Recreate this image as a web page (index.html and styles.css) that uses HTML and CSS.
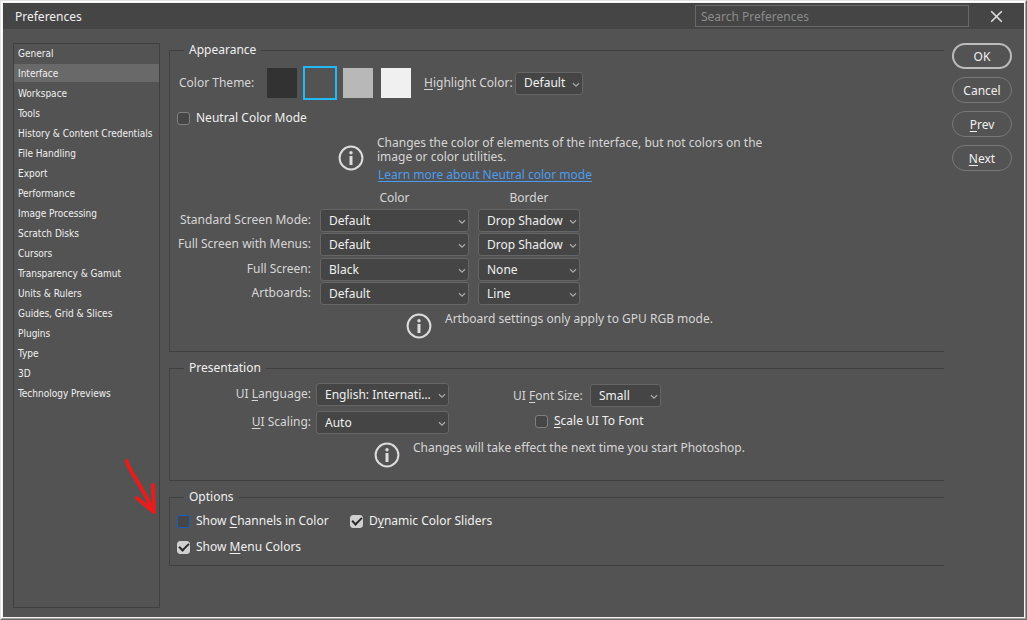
FILE: index.html
```html
<!DOCTYPE html>
<html lang="en">
<head>
<meta charset="utf-8">
<title>Preferences</title>
<link rel="stylesheet" href="styles.css">
</head>
<body>
<svg class="defs" aria-hidden="true">
  <symbol id="chevron" viewBox="0 0 8 6"><path d="M1 1.2 4 4.2 7 1.2" fill="none" stroke="#a8a8a8" stroke-width="1.3"/></symbol>
  <symbol id="info" viewBox="0 0 26 26"><circle cx="13" cy="13" r="11.4" fill="none" stroke="#dcdcdc" stroke-width="2"/><circle cx="13" cy="7.8" r="1.7" fill="#dcdcdc"/><path d="M11.5 11h3v9h-3z" fill="#dcdcdc"/></symbol>
</svg>
<div class="frame">
<div class="bevel">
<div class="dialog">
  <header class="titlebar">
    <h1 class="title">Preferences</h1>
    <input class="search" type="search" placeholder="Search Preferences" aria-label="Search Preferences">
    <button class="close" type="button" aria-label="Close"><svg width="13" height="13" viewBox="0 0 13 13"><path d="M1.2 1.2 11.8 11.8M11.8 1.2 1.2 11.8" stroke="#dedede" stroke-width="1.6" fill="none"/></svg></button>
  </header>
  <div class="body">
    <nav class="sidebar">
      <button type="button" class="item">General</button>
      <button type="button" class="item selected">Interface</button>
      <button type="button" class="item">Workspace</button>
      <button type="button" class="item">Tools</button>
      <button type="button" class="item">History &amp; Content Credentials</button>
      <button type="button" class="item">File Handling</button>
      <button type="button" class="item">Export</button>
      <button type="button" class="item">Performance</button>
      <button type="button" class="item">Image Processing</button>
      <button type="button" class="item">Scratch Disks</button>
      <button type="button" class="item">Cursors</button>
      <button type="button" class="item">Transparency &amp; Gamut</button>
      <button type="button" class="item">Units &amp; Rulers</button>
      <button type="button" class="item">Guides, Grid &amp; Slices</button>
      <button type="button" class="item">Plugins</button>
      <button type="button" class="item">Type</button>
      <button type="button" class="item">3D</button>
      <button type="button" class="item">Technology Previews</button>
      <svg class="pointer" width="36" height="58" viewBox="0 0 36 58" aria-hidden="true"><path d="M4 4C4 7 7 12 10 17C17 28 23 39 30 53M30 28L31 55L14 41" fill="none" stroke="#e91c1c" stroke-width="4" stroke-linecap="round" stroke-linejoin="round"/></svg>
    </nav>
    <main class="panels">
      <fieldset class="group appearance">
        <legend>Appearance</legend>
        <div class="theme-row">
          <span class="theme-label">Color Theme:</span>
          <div class="swatches">
            <button type="button" class="swatch darkest" aria-label="Darkest"></button>
            <button type="button" class="swatch dark current" aria-label="Dark"></button>
            <button type="button" class="swatch light" aria-label="Light"></button>
            <button type="button" class="swatch lightest" aria-label="Lightest"></button>
          </div>
          <label for="highlight"><u>H</u>ighlight Color:</label>
          <span class="select w-highlight"><select id="highlight"><option>Default</option></select><svg><use href="#chevron"/></svg></span>
        </div>
        <label class="check"><input type="checkbox"><span>Neutral Color Mode</span></label>
        <div class="note neutral-note">
          <svg class="info"><use href="#info"/></svg>
          <div>
            <p>Changes the color of elements of the interface, but not colors on the<br>image or color utilities.</p>
            <a href="#">Learn more about Neutral color mode</a>
          </div>
        </div>
        <div class="modes">
          <span class="head color-head">Color</span><span class="head">Border</span>
          <label for="m1">Standard Screen Mode:</label>
          <span class="select"><select id="m1"><option>Default</option></select><svg><use href="#chevron"/></svg></span>
          <span class="select"><select aria-label="Standard border"><option>Drop Shadow</option></select><svg><use href="#chevron"/></svg></span>
          <label for="m2">Full Screen with Menus:</label>
          <span class="select"><select id="m2"><option>Default</option></select><svg><use href="#chevron"/></svg></span>
          <span class="select"><select aria-label="Menus border"><option>Drop Shadow</option></select><svg><use href="#chevron"/></svg></span>
          <label for="m3">Full Screen:</label>
          <span class="select"><select id="m3"><option>Black</option></select><svg><use href="#chevron"/></svg></span>
          <span class="select"><select aria-label="Full screen border"><option>None</option></select><svg><use href="#chevron"/></svg></span>
          <label for="m4">Artboards:</label>
          <span class="select"><select id="m4"><option>Default</option></select><svg><use href="#chevron"/></svg></span>
          <span class="select"><select aria-label="Artboards border"><option>Line</option></select><svg><use href="#chevron"/></svg></span>
        </div>
        <div class="note artboard-note">
          <svg class="info"><use href="#info"/></svg>
          <p>Artboard settings only apply to GPU RGB mode.</p>
        </div>
      </fieldset>

      <fieldset class="group presentation">
        <legend>Presentation</legend>
        <div class="ui-grid">
          <div class="ui-left">
            <label for="lang">UI <u>L</u>anguage:</label>
            <span class="select"><select id="lang"><option>English: International</option></select><svg><use href="#chevron"/></svg></span>
            <label for="scaling"><u>U</u>I Scaling:</label>
            <span class="select"><select id="scaling"><option>Auto</option></select><svg><use href="#chevron"/></svg></span>
          </div>
          <div class="ui-right">
            <div class="font-row">
              <label for="fontsize">UI <u>F</u>ont Size:</label>
              <span class="select w-size"><select id="fontsize"><option>Small</option></select><svg><use href="#chevron"/></svg></span>
            </div>
            <label class="check scale"><input type="checkbox"><span><u>S</u>cale UI To Font</span></label>
          </div>
        </div>
        <div class="note restart-note">
          <svg class="info"><use href="#info"/></svg>
          <p>Changes will take effect the next time you start Photoshop.</p>
        </div>
      </fieldset>

      <fieldset class="group options">
        <legend>Options</legend>
        <div class="option-grid">
          <label class="check"><input type="checkbox" class="focused"><span>Show <u>C</u>hannels in Color</span></label>
          <label class="check"><input type="checkbox" checked><span>D<u>y</u>namic Color Sliders</span></label>
          <label class="check"><input type="checkbox" checked><span>Show <u>M</u>enu Colors</span></label>
        </div>
      </fieldset>
    </main>
    <div class="actions">
      <button type="button" class="pill primary">OK</button>
      <button type="button" class="pill">Cancel</button>
      <button type="button" class="pill"><u>P</u>rev</button>
      <button type="button" class="pill"><u>N</u>ext</button>
    </div>
  </div>
</div>
</div>
</div>
</body>
</html>
```
FILE: styles.css
```css
* { box-sizing: border-box; }

body {
  margin: 0;
  font-family: "Noto Sans", sans-serif;
  font-size: 12px;
  line-height: 14px;
  color: #d6d6d6;
  background: #535353;
}

button, input, select { font: inherit; color: inherit; margin: 0; }
p { margin: 0; }
u { text-underline-offset: 2px; }
.defs { display: none; }

.frame {
  display: flex;
  min-height: 100vh;
  border: 1px solid;
  border-color: #e3e3e3 #696969 #696969 #e3e3e3;
}
.bevel {
  display: flex;
  flex: 1;
  border: 1px solid;
  border-color: #fff #a0a0a0 #a0a0a0 #fff;
}
.dialog {
  display: flex;
  flex-direction: column;
  flex: 1;
  border: 1px solid #f4f4f4;
}

.titlebar {
  display: flex;
  align-items: center;
  height: 26px;
  padding: 0 21px 0 12px;
  background: #454545;
}
.title {
  flex: 1;
  margin: 0;
  padding-top: 2px;
  font-size: 12px;
  font-weight: 400;
  color: #f0f0f0;
}
.search {
  width: 274px;
  height: 22px;
  padding: 0 5px;
  border: 1px solid #6a6a6a;
  background: #454545;
}
.search::placeholder { color: #8c8c8c; opacity: 1; }
.close {
  display: flex;
  margin-left: 21px;
  padding: 0;
  border: 0;
  background: none;
}

.body {
  display: flex;
  flex: 1;
  padding: 14px 12px 9px 10px;
}

.sidebar {
  position: relative;
  width: 147px;
  border: 1px solid #404040;
}
.item {
  display: block;
  width: 100%;
  height: 18px;
  margin-bottom: 2px;
  padding: 2px 4px 0;
  border: 0;
  background: none;
  font-family: "DejaVu Sans Condensed", "DejaVu Sans", sans-serif;
  font-size: 10px;
  text-align: left;
  white-space: nowrap;
  color: #f0f0f0;
}
.selected { background: #696969; }
.pointer { position: absolute; left: 109px; top: 413px; }

.panels {
  flex: 1;
  padding-left: 9px;
}
.group {
  min-width: 0;
  margin: 0 0 9px;
  padding: 0 0 0 7px;
  border: 1px solid #404040;
  border-right: 0;
}
.group legend {
  margin-left: 7px;
  padding: 0 5px;
  color: #f0f0f0;
}

.theme-row {
  display: flex;
  align-items: center;
  padding: 9px 0 0 2px;
}
.theme-label { width: 86px; }
.swatches { display: flex; gap: 4px; margin-right: 11px; }
.swatch {
  width: 34px;
  height: 34px;
  padding: 0;
  border: 2px solid transparent;
  background-clip: padding-box;
}
.darkest { background-color: #323232; }
.dark { background-color: #535353; }
.light { background-color: #b8b8b8; }
.lightest { background-color: #f0f0f0; }
.current { border-color: #26b7f5; }
.theme-row label { width: 91px; }

.select { position: relative; display: block; }
.select select {
  display: block;
  width: 100%;
  height: 23px;
  padding: 0 10px 0 8px;
  border: 1px solid #666;
  border-radius: 3px;
  appearance: none;
  background: #454545;
  color: #f0f0f0;
  text-overflow: ellipsis;
}
.select svg {
  position: absolute;
  right: 3px;
  top: 10px;
  width: 8px;
  height: 6px;
  pointer-events: none;
}
.w-highlight { width: 68px; }
.w-size { width: 71px; }

.check {
  display: flex;
  align-items: center;
  gap: 6px;
  color: #f0f0f0;
}
.check input {
  flex: none;
  width: 13px;
  height: 13px;
  border: 1px solid #808080;
  border-radius: 3px;
  appearance: none;
  background: #464646;
}
.check input.focused { border-color: #1a5cb8; border-radius: 2px; }
.check input:checked {
  border-color: #d0d0d0;
  background: #d0d0d0;
  display: grid;
  place-items: center;
}
.check input:checked::before {
  content: "";
  width: 8px;
  height: 4px;
  margin-bottom: 2px;
  border: solid #2c2c2c;
  border-width: 0 0 2px 2px;
  rotate: -45deg;
}
.appearance > .check { margin-top: 11px; }

.note { display: flex; align-items: flex-start; gap: 13px; }
.info { flex: none; width: 26px; height: 26px; }
.neutral-note { margin: 11px 0 0 161px; }
.neutral-note .info { margin-top: 9px; }
.neutral-note a { display: block; margin: 4px 0 0 1px; color: #4b9cf0; text-underline-offset: 2px; }

.modes {
  display: grid;
  grid-template-columns: 134px 149px 102px;
  grid-template-rows: 18px 24px 25px 24px 23px;
  column-gap: 9px;
  margin-top: 9px;
}
.modes label { padding-top: 4px; text-align: right; white-space: nowrap; }
.color-head { grid-column: 2; }
.head { text-align: center; }
.artboard-note { margin: 8px 0 12px 229px; }
.artboard-note p, .restart-note p { line-height: 12px; }

.ui-grid { display: flex; padding-top: 8px; }
.ui-left {
  display: grid;
  grid-template-columns: 134px 133px;
  gap: 5px;
}
.ui-left label { padding-top: 4px; text-align: right; }
.ui-right { padding: 1px 0 0 64px; }
.font-row { display: flex; align-items: center; }
.font-row label { width: 77px; }
.scale { margin: 7px 0 0 22px; }
.restart-note { margin: 8px 0 12px 197px; }

.option-grid {
  display: grid;
  grid-template-columns: 173px 200px;
  row-gap: 12px;
  padding: 10px 0 11px;
}

.actions {
  display: flex;
  flex-direction: column;
  gap: 8px;
  margin-left: 8px;
}
.pill {
  width: 60px;
  height: 26px;
  padding: 2px 0 0;
  border: 1px solid #787878;
  border-radius: 13px;
  background: none;
  color: #f0f0f0;
}
.primary { border: 2px solid #bcbcbc; }
```
